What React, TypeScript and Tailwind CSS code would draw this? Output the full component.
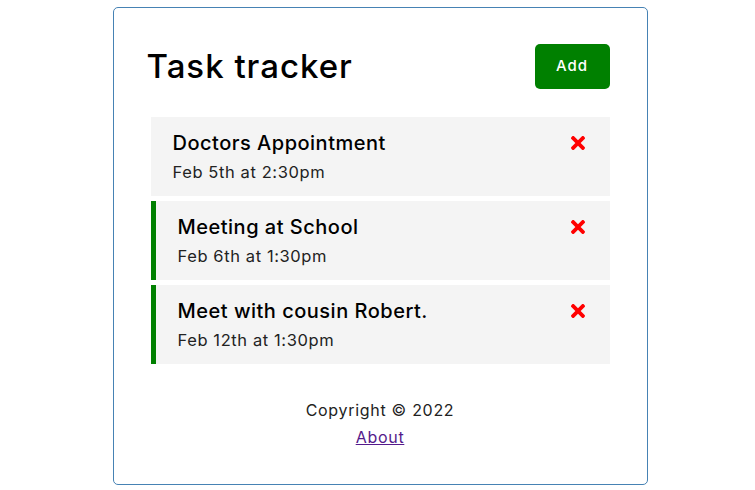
import React from 'react';

type Task = {
  id: number;
  text: string;
  day: string;
  reminder: boolean;
};

const tasks: Task[] = [
  { id: 1, text: 'Doctors Appointment', day: 'Feb 5th at 2:30pm', reminder: false },
  { id: 2, text: 'Meeting at School', day: 'Feb 6th at 1:30pm', reminder: true },
  { id: 3, text: 'Meet with cousin Robert.', day: 'Feb 12th at 1:30pm', reminder: true },
];

const TimesIcon = () => (
  <svg viewBox="0 80 352 352" className="w-[14px] h-[14px] shrink-0" fill="#ff0000">
    <path d="M242.72 256l100.07-100.07c12.28-12.28 12.28-32.19 0-44.48l-22.24-22.24c-12.28-12.28-32.19-12.28-44.48 0L176 189.28 75.93 89.21c-12.28-12.28-32.19-12.28-44.48 0L9.21 111.45c-12.28 12.28-12.28 32.19 0 44.48L109.28 256 9.21 356.07c-12.28 12.28-12.28 32.19 0 44.48l22.24 22.24c12.28 12.28 32.2 12.28 44.48 0L176 322.72l100.07 100.07c12.28 12.28 32.2 12.28 44.48 0l22.24-22.24c12.28-12.28 12.28-32.19 0-44.48L242.72 256z" />
  </svg>
);

const TaskItem = ({ task }: { task: Task }) => (
  <div
    className={`bg-[#f4f4f4] pt-[10px] pb-[11px] pl-[22px] pr-[25px] ${
      task.reminder ? 'border-l-[5px] border-[#008000]' : ''
    }`}
  >
    <h3 className="flex items-center justify-between text-[20px] leading-[32px] font-medium tracking-[0.5px] text-black">
      {task.text}
      <TimesIcon />
    </h3>
    <p className="text-[16.5px] leading-[26px] tracking-[0.6px] text-[#222]">{task.day}</p>
  </div>
);

const App: React.FC = () => {
  return (
    <div className="min-h-screen bg-white pt-[7px] pl-[5px]" style={{ fontFamily: 'Inter, "Noto Sans", sans-serif' }}>
      <div className="mx-auto w-[535px] border border-[#4682b4] rounded-[5px] px-[30px] pt-[36px] pb-[33px]">
        <header className="flex items-center justify-between pl-[3px]">
          <h1 className="text-[33px] leading-[45px] font-medium tracking-[1px] text-black">Task tracker</h1>
          <button className="w-[75px] h-[45px] bg-[#008000] text-white text-[15px] font-medium tracking-[1px] rounded-[5px] mr-[7px]">
            Add
          </button>
        </header>
        <div className="mt-[28px] mx-[7px] flex flex-col gap-[5px]">
          {tasks.map((t) => (
            <TaskItem key={t.id} task={t} />
          ))}
        </div>
        <footer className="mt-[33px] text-center text-[16px] leading-[27px] tracking-[0.7px] text-[#222]">
          <p>Copyright © 2022</p>
          <a href="#" className="underline text-[#551a8b]">About</a>
        </footer>
      </div>
    </div>
  );
};

export default App;
